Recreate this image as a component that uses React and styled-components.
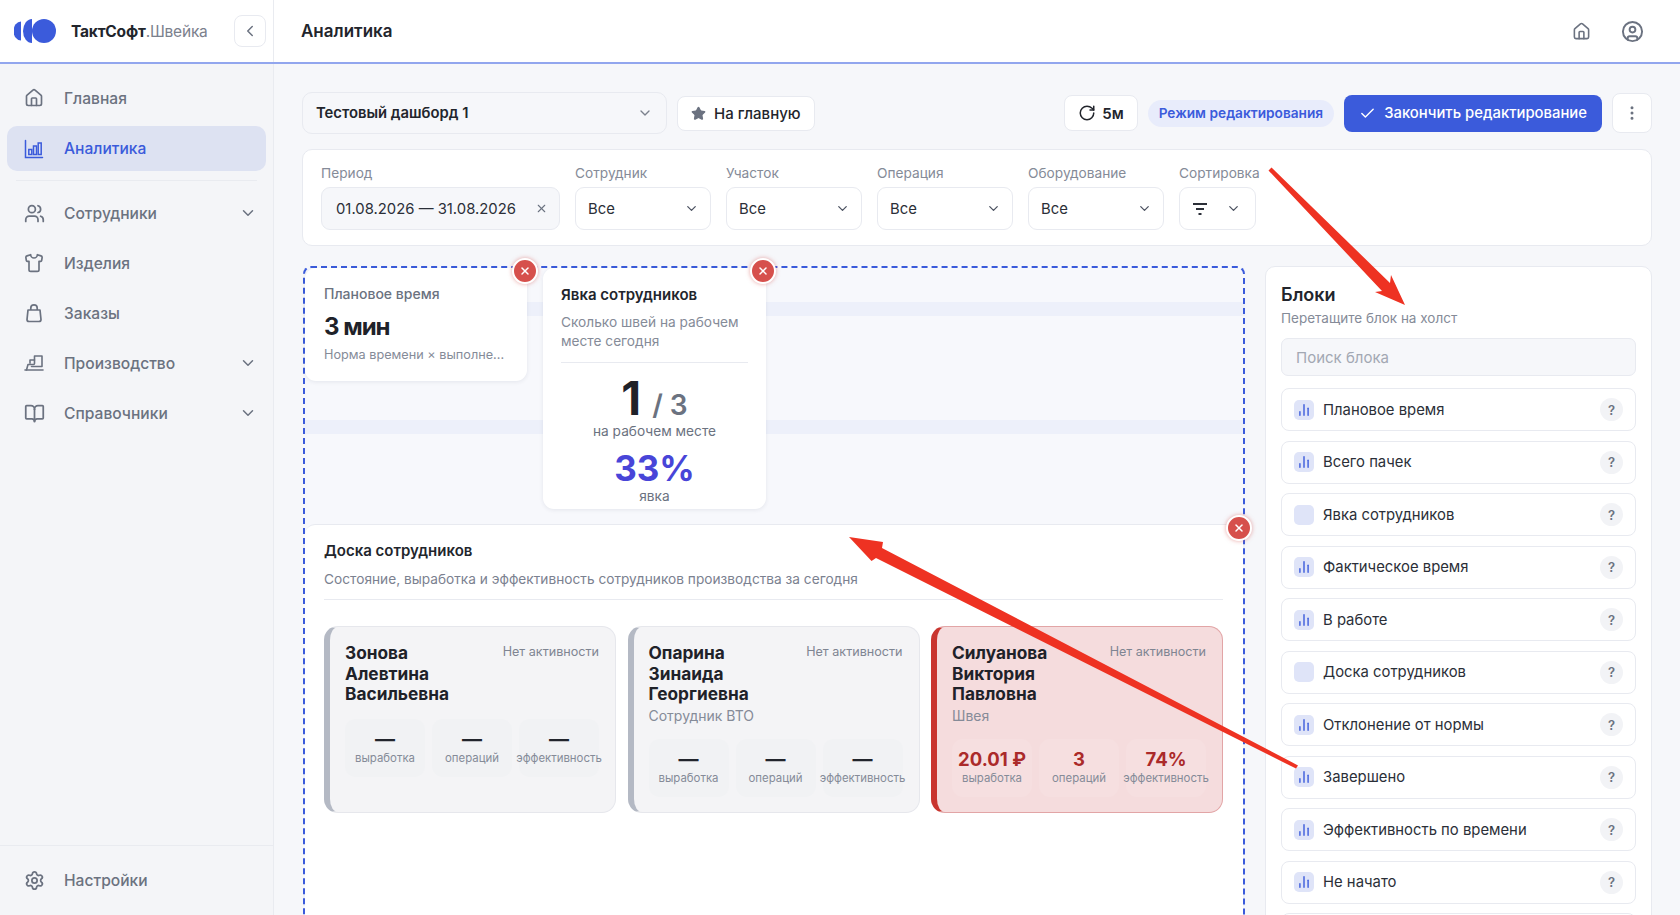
import React from "react";
import styled, { createGlobalStyle } from "styled-components";
import {
  House, Users, Shirt, BookOpen, Settings, ChevronDown, ChevronLeft, CircleUser,
  RotateCw, Check, EllipsisVertical, Star, X, ChartNoAxesColumn,
} from "lucide-react";

const GlobalStyle = createGlobalStyle`
  html, body { margin: 0; padding: 0; height: 100%; }
  body {
    font-family: Inter, "Noto Sans", "Liberation Sans", sans-serif;
    background: #f6f7fa;
    color: #1f2229;
    overflow: hidden;
  }
  * { box-sizing: border-box; }
`;

const Page = styled.div`
  position: relative;
  display: flex;
  flex-direction: column;
  height: 100vh;
  overflow: hidden;
`;

const TopBar = styled.header`
  display: flex;
  flex: none;
  height: 64px;
  background: #fff;
  border-bottom: 2px solid #92a6ee;
`;

const Brand = styled.div`
  display: flex;
  align-items: center;
  width: 274px;
  padding: 0 7px 0 14px;
  border-right: 1px solid #e9ebf0;
`;

const BrandName = styled.div`
  flex: 1;
  margin-left: 15px;
  font-size: 15.5px;
  font-weight: 700;
  color: #22252c;
  letter-spacing: -0.2px;
  span { font-weight: 400; color: #7b818d; }
`;

const CollapseButton = styled.div`
  display: flex;
  align-items: center;
  justify-content: center;
  width: 32px;
  height: 32px;
  border: 1px solid #e8eaf0;
  border-radius: 8px;
  color: #6b7280;
`;

const TopTitleRow = styled.div`
  flex: 1;
  display: flex;
  align-items: center;
  padding: 0 36px 0 27px;
  color: #6b7280;
`;

const PageTitle = styled.div`
  flex: 1;
  font-size: 17px;
  font-weight: 600;
  color: #22252c;
`;

const TopIcons = styled.div`
  display: flex;
  align-items: center;
  gap: 30px;
`;

const Body = styled.div`
  flex: 1;
  display: flex;
  min-height: 0;
`;

const Sidebar = styled.aside`
  display: flex;
  flex-direction: column;
  flex: none;
  width: 274px;
  background: #f4f5f8;
  border-right: 1px solid #e9ebf0;
`;

const Nav = styled.nav`
  flex: 1;
  padding: 9px 7px 0;
`;

const NavItem = styled.div`
  display: flex;
  align-items: center;
  height: ${(p) => (p.$active ? "45px" : "50px")};
  margin: ${(p) => (p.$active ? "3px 0 4px" : "0")};
  padding: 0 9px 0 17px;
  border-radius: 10px;
  font-size: 15.6px;
  font-weight: 500;
  color: ${(p) => (p.$active ? "#3b5bdb" : "#6b7280")};
  background: ${(p) => (p.$active ? "#dde2f2" : "transparent")};
`;

const NavIcon = styled.span`
  display: flex;
  width: 40px;
`;

const NavLabel = styled.span`
  flex: 1;
`;

const NavDivider = styled.div`
  height: 1px;
  margin: 9px 9px 7px;
  background: #e9ebf0;
`;

const SidebarFooter = styled.div`
  flex: none;
  height: 70px;
  display: flex;
  align-items: center;
  padding: 0 7px;
  border-top: 1px solid #e9ebf0;
  & > div { flex: 1; }
`;

const Main = styled.main`
  flex: 1;
  min-width: 0;
  padding: 28px 28px 0;
`;

const Toolbar = styled.div`
  display: flex;
  align-items: center;
  height: 42px;
`;

const DashboardSelect = styled.div`
  display: flex;
  align-items: center;
  justify-content: space-between;
  width: 365px;
  height: 42px;
  padding: 0 13px;
  background: #f6f7fa;
  border: 1px solid #e8eaf0;
  border-radius: 10px;
  font-size: 14.8px;
  font-weight: 600;
  color: #22252c;
  svg { color: #7b818d; }
`;

const ToolButton = styled.div`
  display: flex;
  align-items: center;
  gap: ${(p) => p.$gap || 8}px;
  height: ${(p) => p.$height || 35}px;
  margin-left: ${(p) => p.$left || 0}px;
  padding: ${(p) => p.$padding || "0 13px"};
  background: #fff;
  border: 1px solid #e8eaf0;
  border-radius: 8px;
  font-size: 15px;
  font-weight: ${(p) => p.$weight || 500};
  color: #22252c;
`;

const ToolSpacer = styled.div`
  flex: 1;
`;

const ModePill = styled.div`
  display: flex;
  align-items: center;
  height: 27px;
  margin-left: 10px;
  padding: 0 11px;
  border-radius: 14px;
  background: #e8ecfb;
  color: #3b5bdb;
  font-size: 13.7px;
  font-weight: 600;
  white-space: nowrap;
`;

const FinishButton = styled.div`
  display: flex;
  align-items: center;
  gap: 8px;
  height: 37px;
  margin-left: 10px;
  padding: 0 15px;
  border-radius: 8px;
  background: #3b5bdb;
  color: #fff;
  font-size: 14.85px;
  font-weight: 500;
  white-space: nowrap;
`;

const FilterCard = styled.section`
  display: flex;
  gap: 15px;
  height: 97px;
  margin-top: 15px;
  padding: 15px 18px;
  background: #fff;
  border: 1px solid #e8eaf0;
  border-radius: 10px;
`;

const Field = styled.div`
  width: ${(p) => p.$width}px;
`;

const FieldLabel = styled.div`
  height: 17px;
  margin-bottom: 5px;
  font-size: 13.7px;
  line-height: 17px;
  color: #858b98;
  white-space: nowrap;
`;

const FieldControl = styled.div`
  display: flex;
  align-items: center;
  justify-content: space-between;
  height: 43px;
  padding: 0 ${(p) => p.$right || 11}px 0 ${(p) => (p.$filled ? 14 : 12)}px;
  background: ${(p) => (p.$filled ? "#f6f7fa" : "#fff")};
  border: 1px solid #e8eaf0;
  border-radius: 9px;
  font-size: 14.85px;
  color: #2b2f38;
  white-space: nowrap;
  svg { flex: none; color: #4b5160; }
`;

const Workspace = styled.div`
  display: flex;
  gap: 20px;
  margin-top: 20px;
`;

const Canvas = styled.section`
  position: relative;
  flex: none;
  width: 942px;
  height: 720px;
  margin-left: 1px;
  border: 2px dashed #3b5bdb;
  border-radius: 8px;
  background-color: #f7f8fc;
  background-image: linear-gradient(#edf0fa 14px, transparent 14px);
  background-size: 100% 118px;
  background-position: 0 34px;
`;

const WidgetRow = styled.div`
  display: flex;
  align-items: flex-start;
  gap: 16px;
  height: 256px;
`;

const Widget = styled.div`
  position: relative;
  width: ${(p) => p.$width}px;
  height: ${(p) => p.$height}px;
  padding: ${(p) => p.$padding};
  background: #fff;
  border-radius: 11px;
  box-shadow: 0 1px 4px rgba(30, 40, 80, 0.09);
`;

const CloseDot = styled.div`
  position: absolute;
  top: ${(p) => p.$top}px;
  right: ${(p) => p.$right}px;
  display: flex;
  align-items: center;
  justify-content: center;
  width: 26px;
  height: 26px;
  border: 2px solid #fff;
  border-radius: 50%;
  background: #d6504c;
  color: #fff;
  box-shadow: 0 0 4px rgba(214, 80, 76, 0.5);
  z-index: 2;
`;

const MetricTitle = styled.div`
  font-size: 14px;
  font-weight: 500;
  line-height: 17px;
  color: #6b7280;
`;

const MetricValue = styled.div`
  margin-top: 10px;
  font-size: 24px;
  font-weight: 700;
  line-height: 30px;
  letter-spacing: -1px;
  color: #1f2229;
`;

const MetricHint = styled.div`
  margin-top: 4px;
  font-size: 12.7px;
  line-height: 17px;
  color: #858b98;
  white-space: nowrap;
`;

const AttendanceTitle = styled.div`
  font-size: 15px;
  font-weight: 600;
  line-height: 18px;
  color: #22252c;
`;

const AttendanceText = styled.div`
  margin-top: 9px;
  padding-bottom: 12px;
  border-bottom: 1px solid #e8eaf0;
  font-size: 13.7px;
  line-height: 18.5px;
  color: #858b98;
`;

const AttendanceStats = styled.div`
  display: flex;
  flex-direction: column;
  align-items: center;
`;

const Count = styled.div`
  margin-top: 12px;
  height: 46px;
  line-height: 46px;
  font-size: 46px;
  font-weight: 700;
  color: #1f2229;
  white-space: nowrap;
  span {
    margin-left: 11px;
    font-size: 28px;
    font-weight: 600;
    color: #6b7280;
  }
`;

const StatCaption = styled.div`
  margin-top: ${(p) => p.$top || 0}px;
  font-size: 13.7px;
  line-height: 18px;
  color: #6b7280;
`;

const Percent = styled.div`
  margin-top: 7px;
  height: 42px;
  line-height: 42px;
  font-size: 35px;
  font-weight: 700;
  color: #4845d8;
`;

const Board = styled.div`
  position: relative;
  height: 440px;
  padding: 17px 20px 0 19px;
  background: #fff;
  border-top: 1px solid #e8eaf0;
  border-radius: 10px 10px 0 0;
`;

const BoardTitle = styled.div`
  font-size: 15px;
  font-weight: 600;
  line-height: 18px;
  color: #22252c;
`;

const BoardText = styled.div`
  margin-top: 10px;
  padding-bottom: 11px;
  border-bottom: 1px solid #e8eaf0;
  font-size: 13.7px;
  line-height: 18px;
  color: #7b8190;
`;

const EmployeeGrid = styled.div`
  display: grid;
  grid-template-columns: repeat(3, 292px);
  gap: 11.5px;
  margin-top: 26px;
`;

const EmployeeCard = styled.div`
  height: 187px;
  padding: 16px 16px 0 15px;
  border: 1px solid ${(p) => (p.$alert ? "#e2a5a6" : "#e6e7ec")};
  border-left: 6px solid ${(p) => (p.$alert ? "#c9352f" : "#b4b9c4")};
  border-radius: 14px;
  background: ${(p) => (p.$alert ? "#f5dcdd" : "#f4f4f6")};
`;

const EmployeeHead = styled.div`
  display: flex;
  justify-content: space-between;
`;

const EmployeeName = styled.div`
  width: 130px;
  font-size: 17.3px;
  font-weight: 700;
  line-height: 20.6px;
  color: #1f2229;
`;

const EmployeeStatus = styled.div`
  font-size: 12.6px;
  line-height: 18px;
  color: #7f8592;
  white-space: nowrap;
`;

const EmployeeRole = styled.div`
  margin-top: 1px;
  font-size: 14px;
  line-height: 19px;
  color: #858b98;
`;

const MetricGrid = styled.div`
  display: grid;
  grid-template-columns: repeat(3, minmax(0, 1fr));
  gap: 7px;
  margin-top: 14px;
`;

const MetricBox = styled.div`
  display: flex;
  flex-direction: column;
  align-items: center;
  height: 58px;
  padding-top: 8px;
  border-radius: 11px;
  background: ${(p) => (p.$alert ? "#f6dfe0" : "#f1f2f4")};
`;

const MetricNumber = styled.div`
  font-size: ${(p) => (p.$alert ? 18.5 : 20)}px;
  font-weight: 700;
  line-height: 24px;
  color: ${(p) => (p.$alert ? "#ab2a2a" : "#22252c")};
  white-space: nowrap;
`;

const MetricLabel = styled.div`
  font-size: 11.4px;
  line-height: 15px;
  color: #858b98;
  white-space: nowrap;
`;

const Panel = styled.aside`
  flex: 1;
  height: 720px;
  padding: 17px 15px 0;
  background: #fff;
  border: 1px solid #e8eaf0;
  border-radius: 10px;
`;

const PanelTitle = styled.div`
  font-size: 18px;
  font-weight: 600;
  line-height: 22px;
  color: #22252c;
`;

const PanelText = styled.div`
  margin-top: 3px;
  font-size: 13.5px;
  line-height: 18px;
  color: #858b98;
`;

const SearchBox = styled.div`
  display: flex;
  align-items: center;
  height: 38px;
  margin-top: 11px;
  padding: 0 14px;
  background: #f6f7fa;
  border: 1px solid #e8eaf0;
  border-radius: 7px;
  font-size: 15px;
  color: #a3a8b3;
`;

const BlockList = styled.div`
  display: flex;
  flex-direction: column;
  gap: 9.5px;
  margin-top: 12px;
`;

const BlockItem = styled.div`
  display: flex;
  flex: none;
  align-items: center;
  height: 43px;
  padding: 0 12px;
  border: 1px solid #e8eaf0;
  border-radius: 8px;
  font-size: 14.85px;
  color: #2b2f38;
`;

const BlockIcon = styled.span`
  display: flex;
  align-items: center;
  justify-content: center;
  flex: none;
  width: 20px;
  height: 20px;
  margin-right: 9px;
  border-radius: 5px;
  background: #dfe4f8;
  color: #3b5bdb;
`;

const BlockName = styled.span`
  flex: 1;
`;

const HelpDot = styled.span`
  display: flex;
  align-items: center;
  justify-content: center;
  width: 23px;
  height: 23px;
  border-radius: 50%;
  background: #f2f3f6;
  color: #6b7280;
  font-size: 13px;
  font-weight: 600;
`;

const Annotations = styled.svg`
  position: absolute;
  top: 0;
  left: 0;
  width: 1680px;
  height: 915px;
  pointer-events: none;
  z-index: 5;
`;

const Logo = () => (
  <svg width="42" height="24" viewBox="0 0 42 24" style={{ flex: "none" }}>
    <path d="M7 2.5A7.5 9.5 0 0 0 7 21.5Z" fill="#3b5bdb" />
    <path d="M18 0A9 12 0 0 0 18 24Z" fill="#3b5bdb" />
    <circle cx="30" cy="12" r="12" fill="#3b5bdb" />
  </svg>
);

const AnalyticsIcon = () => (
  <svg width="20" height="20" viewBox="0 0 20 20" fill="none" stroke="currentColor" strokeWidth="1.5">
    <path d="M1.5 1.5V18.5H18.5" strokeLinecap="round" />
    <rect x="4.8" y="10.5" width="3" height="5" />
    <rect x="9.5" y="7" width="3" height="8.5" />
    <rect x="14.2" y="4" width="3" height="11.5" />
  </svg>
);

const BagIcon = () => (
  <svg width="20" height="20" viewBox="0 0 20 20" fill="none" stroke="currentColor" strokeWidth="1.7" strokeLinejoin="round">
    <path d="M4 7H16L17 16.5Q17 18.5 15 18.5H5Q3 18.5 3 16.5Z" />
    <path d="M6.8 7V5A3.2 3.2 0 0 1 13.2 5V7" />
  </svg>
);

const MachineIcon = () => (
  <svg width="20" height="20" viewBox="0 0 20 20" fill="none" stroke="currentColor" strokeWidth="1.6" strokeLinejoin="round" strokeLinecap="round">
    <path d="M1 17H19" />
    <path d="M2.5 17L4 11.5H9.5Q10.5 11.5 10.5 10.5V7H6V10" />
    <path d="M10.5 7V3H18V13.5H7.5" />
  </svg>
);

const navTop = [
  { label: "Главная", icon: <House size={20} /> },
  { label: "Аналитика", icon: <AnalyticsIcon />, active: true },
];

const navRest = [
  { label: "Сотрудники", icon: <Users size={21} />, more: true },
  { label: "Изделия", icon: <Shirt size={20} /> },
  { label: "Заказы", icon: <BagIcon /> },
  { label: "Производство", icon: <MachineIcon />, more: true },
  { label: "Справочники", icon: <BookOpen size={21} />, more: true },
];

const filters = [
  { label: "Сотрудник", value: "Все" },
  { label: "Участок", value: "Все" },
  { label: "Операция", value: "Все" },
  { label: "Оборудование", value: "Все" },
];

const employees = [
  {
    name: "Зонова Алевтина Васильевна",
    metrics: ["—", "—", "—"],
  },
  {
    name: "Опарина Зинаида Георгиевна",
    role: "Сотрудник ВТО",
    metrics: ["—", "—", "—"],
  },
  {
    name: "Силуанова Виктория Павловна",
    role: "Швея",
    metrics: ["20.01 ₽", "3", "74%"],
    alert: true,
  },
];

const metricLabels = ["выработка", "операций", "эффективность"];

const blocks = [
  { name: "Плановое время", chart: true },
  { name: "Всего пачек", chart: true },
  { name: "Явка сотрудников" },
  { name: "Фактическое время", chart: true },
  { name: "В работе", chart: true },
  { name: "Доска сотрудников" },
  { name: "Отклонение от нормы", chart: true },
  { name: "Завершено", chart: true },
  { name: "Эффективность по времени", chart: true },
  { name: "Не начато", chart: true },
];

const NavRow = ({ item }) => (
  <NavItem $active={item.active}>
    <NavIcon>{item.icon}</NavIcon>
    <NavLabel>{item.label}</NavLabel>
    {item.more && <ChevronDown size={18} />}
  </NavItem>
);

const App = () => {
  return (
    <Page>
      <GlobalStyle />
      <TopBar>
        <Brand>
          <Logo />
          <BrandName>
            ТактСофт<span>.Швейка</span>
          </BrandName>
          <CollapseButton>
            <ChevronLeft size={18} />
          </CollapseButton>
        </Brand>
        <TopTitleRow>
          <PageTitle>Аналитика</PageTitle>
          <TopIcons>
            <House size={19} />
            <CircleUser size={23} />
          </TopIcons>
        </TopTitleRow>
      </TopBar>
      <Body>
        <Sidebar>
          <Nav>
            {navTop.map((item) => (
              <NavRow key={item.label} item={item} />
            ))}
            <NavDivider />
            {navRest.map((item) => (
              <NavRow key={item.label} item={item} />
            ))}
          </Nav>
          <SidebarFooter>
            <div>
              <NavRow item={{ label: "Настройки", icon: <Settings size={21} /> }} />
            </div>
          </SidebarFooter>
        </Sidebar>
        <Main>
          <Toolbar>
            <DashboardSelect>
              Тестовый дашборд 1
              <ChevronDown size={16} />
            </DashboardSelect>
            <ToolButton $left={10}>
              <Star size={15} fill="#6b7280" color="#6b7280" />
              На главную
            </ToolButton>
            <ToolSpacer />
            <ToolButton $gap={6} $height={36} $padding="0 13px" $weight={600}>
              <RotateCw size={18} />5м
            </ToolButton>
            <ModePill>Режим редактирования</ModePill>
            <FinishButton>
              <Check size={17} />
              Закончить редактирование
            </FinishButton>
            <ToolButton $left={10} $height={40} $padding="0 10px">
              <EllipsisVertical size={18} color="#6b7280" />
            </ToolButton>
          </Toolbar>
          <FilterCard>
            <Field $width={239}>
              <FieldLabel>Период</FieldLabel>
              <FieldControl $filled>
                01.08.2026 — 31.08.2026
                <X size={13} color="#6b7280" />
              </FieldControl>
            </Field>
            {filters.map((f) => (
              <Field key={f.label} $width={136}>
                <FieldLabel>{f.label}</FieldLabel>
                <FieldControl>
                  {f.value}
                  <ChevronDown size={15} />
                </FieldControl>
              </Field>
            ))}
            <Field $width={77}>
              <FieldLabel>Сортировка</FieldLabel>
              <FieldControl $right={14}>
                <svg width="16" height="14" viewBox="0 0 16 14" fill="none" stroke="#2b2f38" strokeWidth="2">
                  <path d="M1 2H15M4 7H12M6.5 12H9.5" />
                </svg>
                <ChevronDown size={15} />
              </FieldControl>
            </Field>
          </FilterCard>
          <Workspace>
            <Canvas>
              <WidgetRow>
                <Widget $width={222} $height={113} $padding="17px 19px">
                  <CloseDot $top={-10} $right={-11}>
                    <X size={12} strokeWidth={3} />
                  </CloseDot>
                  <MetricTitle>Плановое время</MetricTitle>
                  <MetricValue>3 мин</MetricValue>
                  <MetricHint>Норма времени × выполне...</MetricHint>
                </Widget>
                <Widget $width={223} $height={241} $padding="18px 18px">
                  <CloseDot $top={-10} $right={-10}>
                    <X size={12} strokeWidth={3} />
                  </CloseDot>
                  <AttendanceTitle>Явка сотрудников</AttendanceTitle>
                  <AttendanceText>Сколько швей на рабочем месте сегодня</AttendanceText>
                  <AttendanceStats>
                    <Count>
                      1<span>/ 3</span>
                    </Count>
                    <StatCaption $top={1}>на рабочем месте</StatCaption>
                    <Percent>33%</Percent>
                    <StatCaption $top={-2}>явка</StatCaption>
                  </AttendanceStats>
                </Widget>
              </WidgetRow>
              <Board>
                <CloseDot $top={-10} $right={-9}>
                  <X size={12} strokeWidth={3} />
                </CloseDot>
                <BoardTitle>Доска сотрудников</BoardTitle>
                <BoardText>Состояние, выработка и эффективность сотрудников производства за сегодня</BoardText>
                <EmployeeGrid>
                  {employees.map((e) => (
                    <EmployeeCard key={e.name} $alert={e.alert}>
                      <EmployeeHead>
                        <EmployeeName>{e.name}</EmployeeName>
                        <EmployeeStatus>Нет активности</EmployeeStatus>
                      </EmployeeHead>
                      {e.role && <EmployeeRole>{e.role}</EmployeeRole>}
                      <MetricGrid>
                        {e.metrics.map((value, i) => (
                          <MetricBox key={metricLabels[i]} $alert={e.alert}>
                            <MetricNumber $alert={e.alert}>{value}</MetricNumber>
                            <MetricLabel>{metricLabels[i]}</MetricLabel>
                          </MetricBox>
                        ))}
                      </MetricGrid>
                    </EmployeeCard>
                  ))}
                </EmployeeGrid>
              </Board>
            </Canvas>
            <Panel>
              <PanelTitle>Блоки</PanelTitle>
              <PanelText>Перетащите блок на холст</PanelText>
              <SearchBox>Поиск блока</SearchBox>
              <BlockList>
                {blocks.map((b) => (
                  <BlockItem key={b.name}>
                    <BlockIcon>{b.chart && <ChartNoAxesColumn size={14} strokeWidth={2.4} />}</BlockIcon>
                    <BlockName>{b.name}</BlockName>
                    <HelpDot>?</HelpDot>
                  </BlockItem>
                ))}
                <BlockItem />
              </BlockList>
            </Panel>
          </Workspace>
        </Main>
      </Body>
      <Annotations viewBox="0 0 1680 915">
        <polygon
          points="1271.5,167.5 1390,283 1391,275 1405,305 1375,292 1382,291 1268.5,170.5"
          fill="#ee3222"
        />
        <polygon
          points="1298,765.4 882,548 883,542 849,537 871.5,561 876,558 1296,768.6"
          fill="#ee3222"
        />
      </Annotations>
    </Page>
  );
};

export default App;
